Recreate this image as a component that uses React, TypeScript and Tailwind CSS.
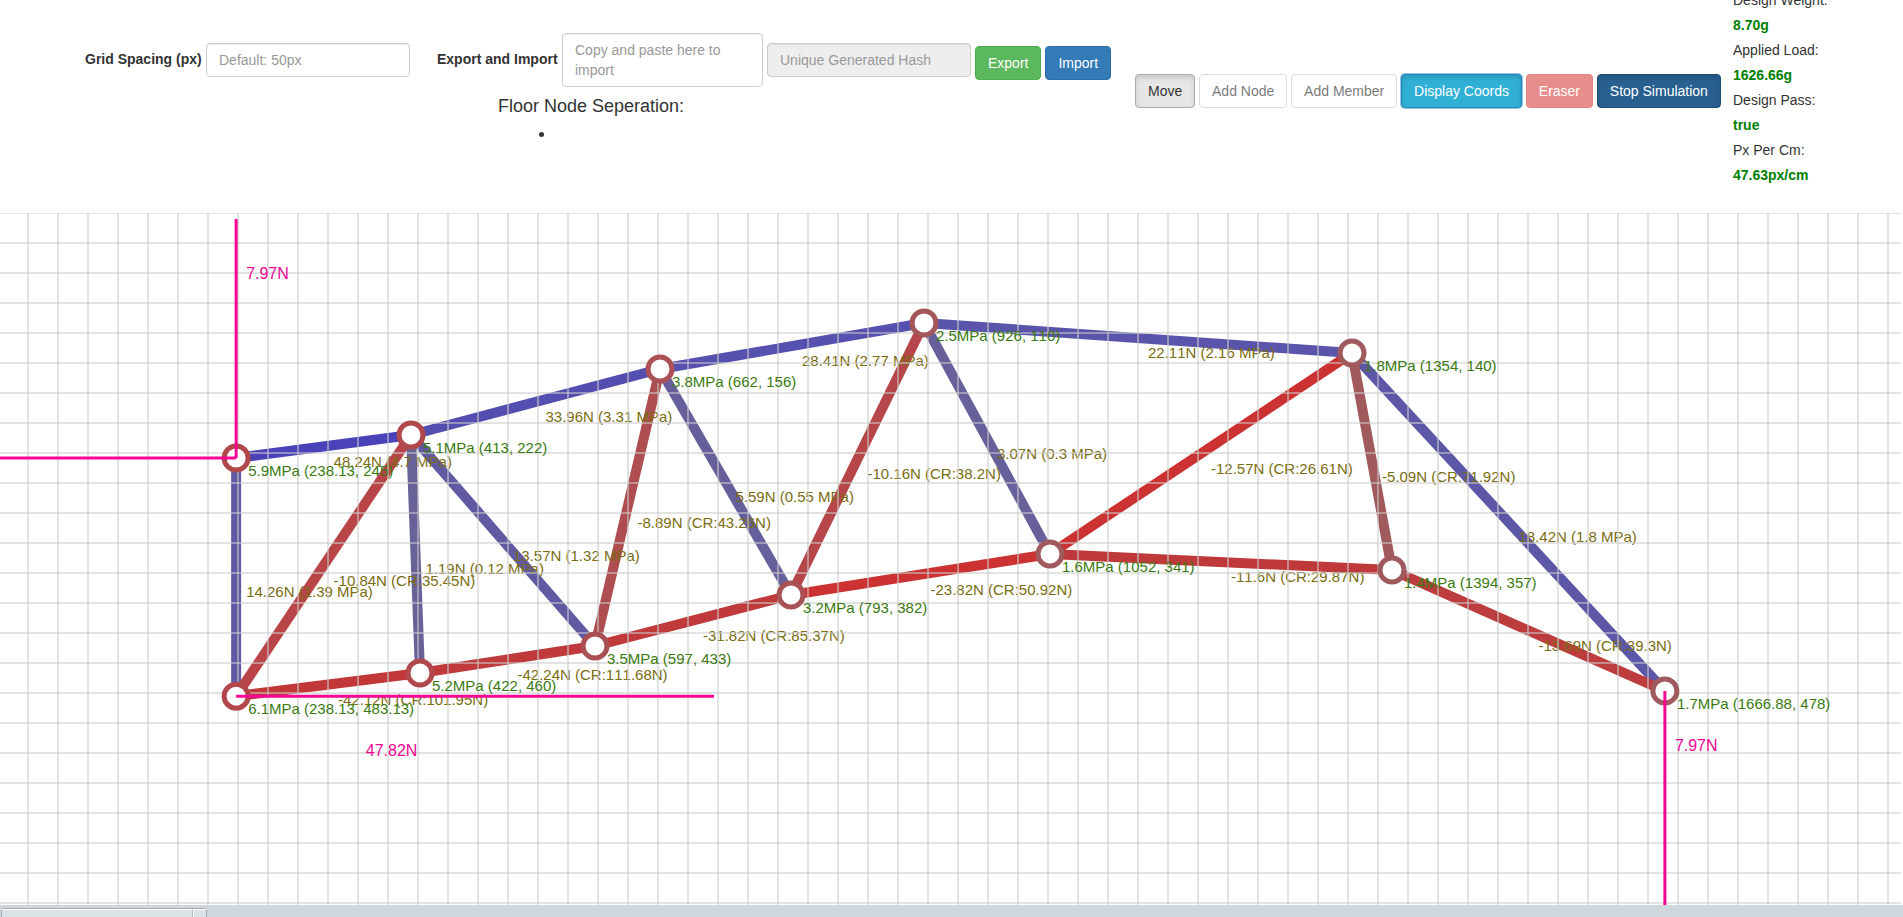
import type { ReactNode } from "react";

type Point = [number, number];

interface TrussNode {
  at: Point;
  stress: string;
  color: string;
}

interface Member {
  from: number;
  to: number;
  label: string;
  color: string;
}

const GRID = 30;
const WIDTH = 1903;
const HEIGHT = 692;

const nodes: TrussNode[] = [
  { at: [238.13, 245], stress: "5.9", color: "#b0484c" },
  { at: [413, 222], stress: "5.1", color: "#b0484c" },
  { at: [662, 156], stress: "3.8", color: "#ab5054" },
  { at: [926, 110], stress: "2.5", color: "#a5565a" },
  { at: [1354, 140], stress: "1.8", color: "#a05a5e" },
  { at: [1666.88, 478], stress: "1.7", color: "#a05a5e" },
  { at: [1394, 357], stress: "1.4", color: "#a05a5e" },
  { at: [1052, 341], stress: "1.6", color: "#a05a5e" },
  { at: [793, 382], stress: "3.2", color: "#a85256" },
  { at: [597, 433], stress: "3.5", color: "#aa5054" },
  { at: [422, 460], stress: "5.2", color: "#b0484c" },
  { at: [238.13, 483.13], stress: "6.1", color: "#b2464a" },
];

const members: Member[] = [
  { from: 0, to: 1, label: "48.24N (4.7 MPa)", color: "#4a42b8" },
  { from: 1, to: 2, label: "33.96N (3.31 MPa)", color: "#544eb0" },
  { from: 2, to: 3, label: "28.41N (2.77 MPa)", color: "#5650ae" },
  { from: 3, to: 4, label: "22.11N (2.16 MPa)", color: "#5a55aa" },
  { from: 4, to: 5, label: "18.42N (1.8 MPa)", color: "#5c57a7" },
  { from: 0, to: 11, label: "14.26N (1.39 MPa)", color: "#5f5aa2" },
  { from: 1, to: 10, label: "1.19N (0.12 MPa)", color: "#676398" },
  { from: 1, to: 9, label: "13.57N (1.32 MPa)", color: "#5f5aa2" },
  { from: 2, to: 8, label: "5.59N (0.55 MPa)", color: "#65609b" },
  { from: 3, to: 7, label: "3.07N (0.3 MPa)", color: "#66619a" },
  { from: 11, to: 1, label: "-10.84N (CR:35.45N)", color: "#ba4548" },
  { from: 11, to: 10, label: "-42.12N (CR:101.95N)", color: "#c23839" },
  { from: 10, to: 9, label: "-42.24N (CR:111.68N)", color: "#c03a3b" },
  { from: 9, to: 8, label: "-31.82N (CR:85.37N)", color: "#c03a3b" },
  { from: 9, to: 2, label: "-8.89N (CR:43.26N)", color: "#ae4e51" },
  { from: 8, to: 3, label: "-10.16N (CR:38.2N)", color: "#b64649" },
  { from: 8, to: 7, label: "-23.82N (CR:50.92N)", color: "#cc3232" },
  { from: 7, to: 4, label: "-12.57N (CR:26.61N)", color: "#cc3232" },
  { from: 7, to: 6, label: "-11.6N (CR:29.87N)", color: "#c0393a" },
  { from: 4, to: 6, label: "-5.09N (CR:71.92N)", color: "#a05a5c" },
  { from: 6, to: 5, label: "-13.69N (CR:39.3N)", color: "#bd3d3e" },
];

const steps = (limit: number) =>
  Array.from({ length: Math.floor(limit / GRID) + 1 }, (_, i) => i * GRID);

function Canvas() {
  return (
    <svg
      className="block h-[692px] w-[1903px] shrink-0"
      viewBox={`2 0 ${WIDTH} ${HEIGHT}`}
      fontFamily='"Liberation Sans", Arial, sans-serif'
      style={{ fontKerning: "none" }}
    >
      <defs>
        <clipPath id="drawing">
          <rect x={0} y={0} width={WIDTH} height={HEIGHT} />
        </clipPath>
      </defs>
      <g clipPath="url(#drawing)">
        <g strokeWidth={10}>
          {members.map((m) => (
            <line
              key={m.label}
              x1={nodes[m.from].at[0]}
              y1={nodes[m.from].at[1]}
              x2={nodes[m.to].at[0]}
              y2={nodes[m.to].at[1]}
              stroke={m.color}
            />
          ))}
        </g>
        <g fontSize={15} fill="#7a6c10">
          {members.map((m) => (
            <text
              key={m.label}
              x={(nodes[m.from].at[0] + nodes[m.to].at[0]) / 2 + 10}
              y={(nodes[m.from].at[1] + nodes[m.to].at[1]) / 2 + 20}
            >
              {m.label}
            </text>
          ))}
        </g>
        <g stroke="#cccccc" strokeOpacity={0.55} strokeWidth={2}>
          {steps(WIDTH).map((x) => (
            <line key={`v${x}`} x1={x} y1={0} x2={x} y2={HEIGHT} />
          ))}
          {steps(HEIGHT).map((y) => (
            <line key={`h${y}`} x1={0} y1={y} x2={WIDTH} y2={y} />
          ))}
        </g>
        <g fill="#ffffff" strokeWidth={5}>
          {nodes.map((n) => (
            <circle key={n.at.join()} cx={n.at[0]} cy={n.at[1]} r={12} stroke={n.color} />
          ))}
        </g>
        <g fontSize={15} fill="#3a7a10">
          {nodes.map((n) => (
            <text key={n.at.join()} x={n.at[0] + 12} y={n.at[1] + 18}>
              {`${n.stress}MPa (${n.at[0]}, ${n.at[1]})`}
            </text>
          ))}
        </g>
        <g stroke="#f80594" strokeWidth={3}>
          <line x1={238.13} y1={6} x2={238.13} y2={245} />
          <line x1={0} y1={245} x2={238.13} y2={245} />
          <line x1={238.13} y1={483.13} x2={716} y2={483.13} />
          <line x1={1666.88} y1={478} x2={1666.88} y2={HEIGHT} />
        </g>
        <g fontSize={16} fill="#f00594">
          <text x={248.13} y={66}>7.97N</text>
          <text x={367.8} y={543}>47.82N</text>
          <text x={1676.88} y={538}>7.97N</text>
        </g>
      </g>
    </svg>
  );
}

function Button({ className, children }: { className: string; children: ReactNode }) {
  return (
    <button
      className={`h-[34px] shrink-0 rounded border px-3 py-1.5 text-sm leading-5 whitespace-nowrap ${className}`}
    >
      {children}
    </button>
  );
}

const field =
  "block rounded border border-[#cccccc] px-3 py-1.5 text-sm leading-5 placeholder:text-[#999999] shadow-[inset_0_1px_1px_rgba(0,0,0,0.075)]";
const pressed = "shadow-[inset_0_3px_5px_rgba(0,0,0,0.125)]";

const stats = [
  ["Design Weight:", "8.70g"],
  ["Applied Load:", "1626.66g"],
  ["Design Pass:", "true"],
  ["Px Per Cm:", "47.63px/cm"],
];

export default function App() {
  return (
    <div className="flex h-[917px] w-[1903px] flex-col overflow-hidden bg-white font-['Liberation_Sans',Arial,sans-serif] text-sm text-[#333333]">
      <header className="flex h-[213px] shrink-0 items-start overflow-hidden">
        <div className="w-[1135px] shrink-0 pt-[33px]">
          <div className="flex h-[54px] items-center pl-[85px]">
            <label className="w-[121px] shrink-0 pb-0.5 leading-5 font-bold">Grid Spacing (px)</label>
            <input className={`${field} h-[34px] w-[204px] bg-white`} placeholder="Default: 50px" />
            <label className="ml-[27px] w-[125px] shrink-0 pb-0.5 leading-5 font-bold">Export and Import</label>
            <textarea
              className={`${field} h-[54px] w-[201px] resize-none overflow-hidden bg-white`}
              placeholder="Copy and paste here to import"
            />
            <input
              className={`${field} ml-1 h-[34px] w-[204px] bg-[#eeeeee]`}
              placeholder="Unique Generated Hash"
              readOnly
            />
            <div className="ml-1 flex gap-1 pt-1.5">
              <Button className="border-[#4cae4c] bg-[#5cb85c] text-white">Export</Button>
              <Button className="border-[#2e6da4] bg-[#337ab7] text-white">Import</Button>
            </div>
          </div>
          <h4 className="mt-[9px] pl-[498px] text-lg leading-5">Floor Node Seperation:</h4>
          <ul className="mt-[7px] list-disc pl-[556px] text-lg leading-5">
            <li className="h-5" />
          </ul>
        </div>
        <div className="flex w-[598px] shrink-0 gap-[3.8px] pt-[74px]">
          <Button className={`border-[#adadad] bg-[#e6e6e6] text-[#333333] ${pressed}`}>Move</Button>
          <Button className="border-[#cccccc] bg-white text-[#333333] opacity-65">Add Node</Button>
          <Button className="border-[#cccccc] bg-white text-[#333333] opacity-65">Add Member</Button>
          <Button className="border-[#2a85b5] bg-[#31b0d5] text-white shadow-[inset_0_3px_5px_rgba(0,0,0,0.125),0_0_0_1px_#8fc6ee]">
            Display Coords
          </Button>
          <Button className="border-[#d43f3a] bg-[#d9534f] text-white opacity-65">Eraser</Button>
          <Button className={`border-[#204d74] bg-[#286090] text-white ${pressed}`}>Stop Simulation</Button>
        </div>
        <dl className="-mt-3 leading-[25px]">
          {stats.map(([name, value]) => (
            <div key={name}>
              <dt>{name}</dt>
              <dd className="font-bold text-[#008000]">{value}</dd>
            </div>
          ))}
        </dl>
      </header>
      <Canvas />
      <div className="flex h-3 shrink-0 bg-[#ced7db] pt-[3px] pl-px">
        <div className="flex h-[9px] w-[206px] rounded-t-sm border border-b-0 border-[#a3adb3] bg-[#dce3e6]">
          <div className="w-[191px] border-t border-r border-t-white border-r-[#b0babf]" />
          <div className="flex-1 border-t border-l border-white" />
        </div>
      </div>
    </div>
  );
}
